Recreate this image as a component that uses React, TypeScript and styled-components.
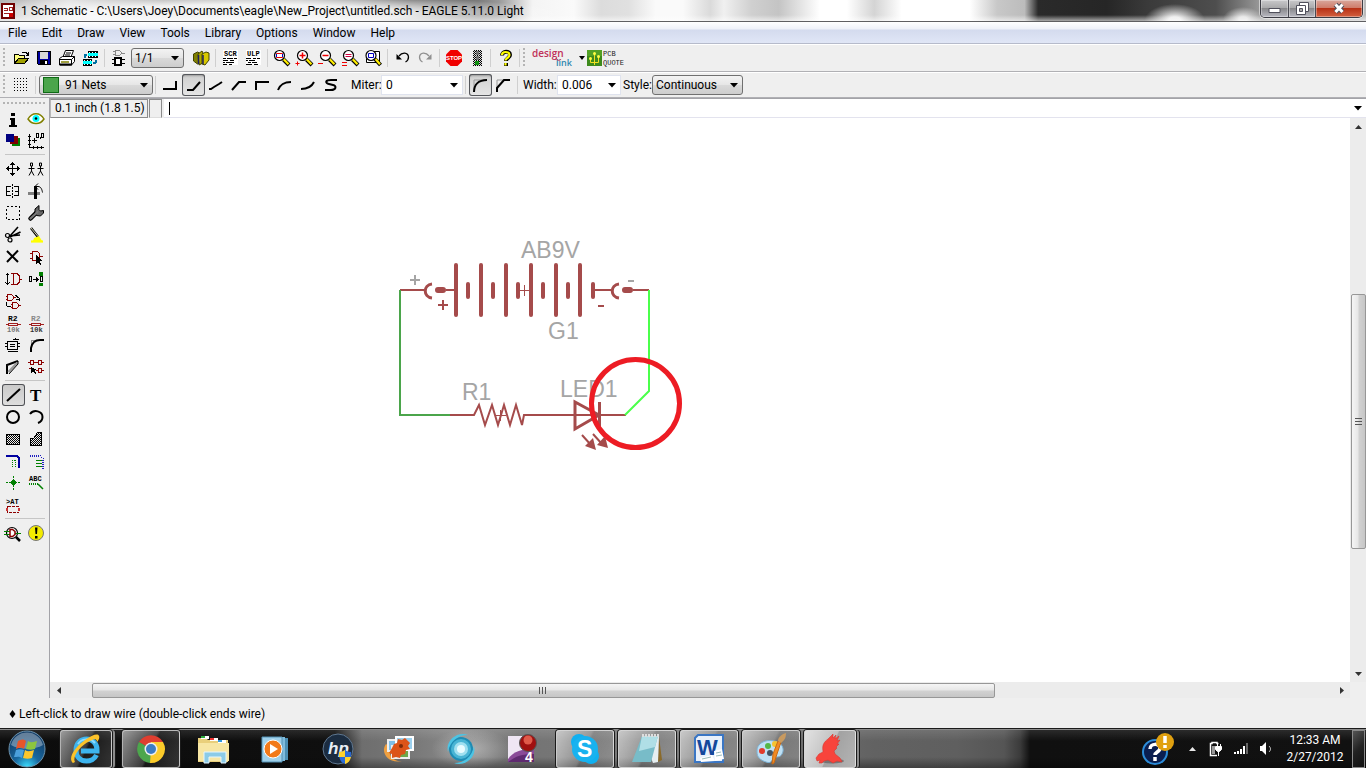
import React from "react";
import styled, { createGlobalStyle, css } from "styled-components";

const GlobalStyle = createGlobalStyle`
  * { box-sizing: border-box; }
  body { margin: 0; background: #efefef; }
  body, button, input, select {
    font-family: Roboto, "Open Sans", sans-serif;
    font-size: 12px;
    color: #000;
  }
  button, input, select { margin: 0; padding: 0; border: 0; background: none; border-radius: 0; outline: 0; }
  svg { display: block; flex: none; }
`;

/* ---------- frame ---------- */

const Window = styled.div`
  min-height: 100vh;
  display: flex;
  flex-direction: column;
  background: #efefef;
`;

const TitleBar = styled.header`
  height: 22px;
  display: flex;
  align-items: center;
  padding-left: 1px;
  border-bottom: 1px solid #5f5f62;
  background:
    linear-gradient(to bottom, transparent 0 15px, rgba(255, 255, 255, 0.6) 21px),
    radial-gradient(ellipse 30px 16px at 86% 20px, #ececec 20%, transparent),
    radial-gradient(ellipse 20px 12px at 91% 19px, #e4e4e4 20%, transparent),
    radial-gradient(ellipse 320px 19px at 18% 14px, rgba(255, 255, 255, 0.85) 50%, transparent),
    linear-gradient(to right, #b4b4b4 0, #e0e0e0 5%, #a4a4a4 12%, #b8b8b8 22%, #757575 30%, #7a7a7a 35%,
      #999 36.5%, #f4f4f4 39%, #fafafa 42%, #dcdcdc 44%, #e0e0e0 46%, #fafafa 48%, #fafafa 50%, #dadada 52%,
      #f0f0f0 53%, #d0d0d0 55%, #c4c4c4 57%, #fff 60%, #fff 62%, #d4d4d4 64%, #fff 66%, #fff 71%,
      #c8c8c8 73%, #bcbcbc 75%, #2a2a2a 76%, #262626 81%, #3a3a3a 84%, #4e4e4e 89%, #aaa 93%, #bbb);
`;

const AppTitle = styled.h1`
  flex: 1;
  margin: 0 0 0 6px;
  font-size: 12px;
  line-height: 20px;
  font-weight: 400;
  white-space: pre;
`;

const WindowButtons = styled.div`
  align-self: flex-start;
  display: flex;
  height: 18px;
  margin-right: 3px;
  border: 1px solid #3c3c44;
  border-top: 0;
  border-radius: 0 0 5px 5px;
  overflow: hidden;
  box-shadow: 0 0 0 1px rgba(255, 255, 255, 0.5);
`;

const WindowButton = styled.button<{ $w: number; $close?: boolean }>`
  width: ${(p) => p.$w}px;
  display: grid;
  place-items: center;
  border-right: ${(p) => (p.$close ? "0" : "1px solid #4a4a52")};
  background: ${(p) =>
    p.$close
      ? "linear-gradient(#d9a79c 0, #cf7d6b 45%, #b83216 50%, #d3603f 100%)"
      : "linear-gradient(#c9c9cb 0, #aaaaac 45%, #88888b 50%, #b9b9c2 100%)"};
  box-shadow: inset 0 0 0 1px rgba(255, 255, 255, 0.35);
`;

const MenuBar = styled.nav`
  height: 22px;
  display: flex;
  align-items: center;
  gap: 15px;
  padding: 0 8px;
  border-bottom: 1px solid #b6bbcb;
  background: linear-gradient(#fff 0, #eef1f9 7px, #d4dbee 8px, #e0e6f6 100%);
`;

const MenuItem = styled.a`
  color: #000;
  text-decoration: none;
  line-height: 20px;
`;

const ToolBar = styled.div<{ $h: number }>`
  height: ${(p) => p.$h}px;
  display: flex;
  align-items: center;
  border-top: 1px solid #fff;
  border-bottom: 1px solid #b0b0b4;
  padding-left: 3px;
  background: #efefef;
`;

const Grip = styled.div<{ $across?: boolean }>`
  flex: none;
  ${(p) =>
    p.$across
      ? css`height: 3px; margin: 4px 4px 3px 3px;`
      : css`width: 3px; height: 20px; margin-right: 4px;`}
  background: radial-gradient(circle at 1px 1px, #b4b4b4 1px, transparent 1px) 0 0 / 4px 4px;
`;

const Separator = styled.div<{ $room?: number }>`
  flex: none;
  width: 1px;
  height: 18px;
  margin: 0 ${(p) => 2 + (p.$room ?? 0)}px 0 2px;
  background: #cfcfcf;
`;

const ToolButton = styled.button<{ $on?: boolean }>`
  flex: none;
  width: 23px;
  height: 22px;
  display: grid;
  place-items: center start;
  ${(p) =>
    p.$on &&
    css`
      border-radius: 3px;
      background: linear-gradient(#cfcfcf, #e6e6e6);
      box-shadow: inset 0 0 0 1px #55575c, inset 0 2px 2px rgba(0, 0, 0, 0.25);
    `}
`;

const DropShell = styled.div<{ $w: number; $field?: boolean }>`
  flex: none;
  width: ${(p) => p.$w}px;
  height: 20px;
  display: flex;
  align-items: center;
  position: relative;
  margin-left: 1px;
  padding-left: ${(p) => (p.$field ? 4 : 3)}px;
  border: 1px solid ${(p) => (p.$field ? "#dfe3ee" : "#707070")};
  border-radius: ${(p) => (p.$field ? 0 : 3)}px;
  background: ${(p) => (p.$field ? "#fff" : "linear-gradient(#f3f3f3, #e6e6e6 48%, #d9d9d9 52%, #cdcdcd)")};
  svg.arrow { position: absolute; right: 4px; top: 7px; pointer-events: none; }
  select, input { flex: 1; min-width: 0; width: 100%; height: 18px; appearance: none; }
`;

const Swatch = styled.span`
  flex: none;
  width: 16px;
  height: 16px;
  margin-right: 6px;
  border: 1px solid #0f6b16;
  background: #4ba54b;
`;

const FieldLabel = styled.label<{ $gap: number; $w?: number }>`
  flex: none;
  width: ${(p) => (p.$w ? `${p.$w}px` : "auto")};
  margin-left: ${(p) => p.$gap}px;
  white-space: nowrap;
`;

const Body = styled.div`
  flex: 1;
  display: flex;
  min-height: 0;
`;

const SideBar = styled.aside`
  flex: none;
  width: 50px;
  border-right: 1px solid #a3a3a8;
`;

const Palette = styled.div`
  display: grid;
  grid-template-columns: 23px 23px;
  padding-left: 2px;
`;

const PaletteButton = styled.button<{ $on?: boolean }>`
  width: 23px;
  height: 22px;
  ${(p) =>
    p.$on &&
    css`
      border-radius: 3px;
      background: linear-gradient(#c9c9c9, #dedede);
      box-shadow: inset 0 0 0 1px #4f5156;
    `}
`;

const PaletteRule = styled.hr`
  height: 1px;
  margin: 2px 4px 3px 5px;
  border: 0;
  background: #c6c6c6;
`;

const Workspace = styled.div`
  flex: 1;
  min-width: 0;
  display: flex;
  flex-direction: column;
`;

const CommandLine = styled.div`
  height: 20px;
  flex: none;
  display: flex;
  border-top: 1px solid #a3a3a8;
  background: #efefef;
`;

const Coordinates = styled.output`
  width: 98px;
  padding-left: 4px;
  line-height: 17px;
  border: 1px solid #8c8c8c;
  border-left-color: #b8b8b8;
  white-space: nowrap;
`;

const Prompt = styled.div`
  width: 13px;
  margin: 0 2px 0 1px;
  border: 1px solid #8c8c8c;
  border-bottom-color: #ddd;
`;

const CommandBox = styled.div`
  flex: 1;
  display: flex;
  align-items: center;
  padding: 0 4px 0 5px;
  background: #fff;
  border-bottom: 1px solid #e3e3ee;
`;

const CommandInput = styled.input`
  flex: 1;
  height: 16px;
`;

const Caret = styled.span`
  width: 1px;
  height: 13px;
  background: #000;
`;

const CanvasRow = styled.div`
  flex: 1;
  display: flex;
  min-height: 0;
`;

const Sheet = styled.main`
  flex: 1;
  min-width: 0;
  padding: 112px 0 0 340px;
  background: #fff;
`;

const ScrollColumn = styled.div`
  flex: none;
  width: 16px;
  display: flex;
  flex-direction: column;
  align-items: center;
  background: #ececec;
`;

const ScrollRow = styled.div`
  flex: none;
  height: 16px;
  margin-right: 16px;
  display: flex;
  align-items: center;
  background: #ececec;
`;

const ScrollArrow = styled.button`
  flex: none;
  width: 17px;
  height: 17px;
  display: grid;
  place-items: center;
`;

const Gap = styled.div<{ $grow: number }>`
  flex: ${(p) => p.$grow} 0 0;
`;

const Thumb = styled.div<{ $grow: number; $across?: boolean }>`
  flex: ${(p) => p.$grow} 0 0;
  ${(p) => (p.$across ? "height: 15px;" : "width: 15px;")}
  display: grid;
  place-items: center;
  border: 1px solid #979797;
  border-radius: 2px;
  background: linear-gradient(${(p) => (p.$across ? "to bottom" : "to right")}, #f5f5f5, #e6e6e6 48%, #d2d2d2 52%, #c6c6c6);
`;

const StatusBar = styled.footer`
  height: 30px;
  flex: none;
  display: flex;
  align-items: center;
  gap: 3px;
  padding: 2px 9px 0;
`;

/* ---------- taskbar ---------- */

const TaskBar = styled.div`
  height: 40px;
  flex: none;
  display: flex;
  align-items: center;
  border-top: 1px solid #1b1b1b;
  box-shadow: inset 0 1px 0 #8b8b8b;
  background:
    linear-gradient(to bottom, rgba(255, 255, 255, 0.12) 0, transparent 12px 28px, rgba(0, 0, 0, 0.35)),
    radial-gradient(ellipse 40px 20px at 34.5% 50%, rgba(200, 200, 200, 0.6), transparent),
    linear-gradient(to right, #0c0c0c 0, #0f0f0f 24.5%, #6e6e6e 26.5%, #777 30%, #8a8a8a 34%, #747474 38%,
      #7b7b7b 50%, #6b6b6b 60%, #626262 64%, #5f5f5f 70%, #555 73.5%, #3a3a3a 74.7%, #101010 75.4%, #111 100%);
`;

const StartButton = styled.button`
  width: 54px;
  flex: none;
  display: grid;
  place-items: center;
`;

const Tasks = styled.div`
  flex: 1;
  display: flex;
  gap: 4px;
  padding: 1px 0 0 6px;
`;

const Task = styled.button<{ $open?: boolean; $active?: boolean; $stack?: boolean }>`
  width: ${(p) => (p.$stack ? 52 : 58)}px;
  margin-right: ${(p) => (p.$stack ? 6 : 0)}px;
  height: 38px;
  display: grid;
  place-items: center;
  border-radius: 3px;
  ${(p) =>
    p.$open &&
    css`
      border: 1px solid rgba(225, 225, 225, 0.75);
      background: ${p.$active
        ? "linear-gradient(115deg, #e2e2e2, #c0c0c0 50%, #a2a2a2 52%, #b4b4b4)"
        : "linear-gradient(115deg, rgba(255,255,255,.55), rgba(255,255,255,.2) 48%, rgba(255,255,255,.06) 52%, rgba(255,255,255,.16))"};
      box-shadow: 0 0 0 1px #1a1a1a${p.$stack ? ", 3px 0 0 0 #8c8c8c, 4px 0 0 0 #1a1a1a" : ""};
    `}
`;

const Tray = styled.div`
  flex: none;
  display: flex;
  align-items: center;
  color: #fff;
`;

const TrayIcon = styled.button<{ $w: number }>`
  width: ${(p) => p.$w}px;
  height: 36px;
  display: grid;
  place-items: center;
`;

const Clock = styled.time`
  width: 72px;
  text-align: center;
  line-height: 17px;
  color: #fff;
`;

const ShowDesktop = styled.button`
  width: 13px;
  height: 38px;
  margin: 0 1px;
  border: 1px solid #8a8a8a;
  background: linear-gradient(135deg, #555, #222 50%, #111);
`;

/* ---------- drawing helpers ---------- */

const Glyph = ({ children, smooth }: { children: React.ReactNode; smooth?: boolean }) => (
  <svg width="22" height="22" viewBox="0 0 22 22" fill="none" stroke="#000" aria-hidden="true"
    shapeRendering={smooth ? "auto" : "crispEdges"}>{children}</svg>
);

const Tiny = ({ x, y, size = 7, fill = "#000", children }: { x: number; y: number; size?: number; fill?: string; children: string }) => (
  <text x={x} y={y} fontSize={size} fontFamily="Liberation Mono, monospace" fontWeight="700" fill={fill} stroke="none">{children}</text>
);

const DownArrow = ({ className }: { className?: string }) => (
  <svg className={className} width="8" height="5" viewBox="0 0 8 5" aria-hidden="true"><path d="M0 0h8L4 4.500z" /></svg>
);

const Lens = ({ children }: { children?: React.ReactNode }) => (
  <Glyph smooth>
    <path d="M13.500 12.500l5.500 5.500" strokeWidth="4" />
    <path d="M13.500 12l5 5.300" stroke="#ffee00" strokeWidth="2.200" />
    <circle cx="9.500" cy="8.500" r="5" fill="#fff" strokeWidth="1.200" />
    {children}
  </Glyph>
);

const hatch = (
  <pattern id="hatch" width="2" height="2" patternUnits="userSpaceOnUse">
    <path d="M0 0h1v1H0zM1 1h1v1H1z" fill="#000" stroke="none" />
  </pattern>
);

const gate = (x: number, y: number, c: string) => (
  <path d={`M${x} ${y}h4l2 2v2l-2 2h-4zM${x - 2} ${y + 1.5}h2M${x - 2} ${y + 4.5}h2M${x + 6} ${y + 3}h2`} stroke={c} />
);

/* ---------- main toolbar icons ---------- */

const mainIcons: Record<string, React.ReactNode> = {
  Open: (
    <Glyph>
      <path d="M4.500 16.500v-9h4l1 1h5v3" fill="#ffff80" />
      <path d="M4.500 16.500l4-5h10l-4 5z" fill="#a0a000" />
      <path d="M12 5.500h4l2 2M18.500 5v3h-3" />
    </Glyph>
  ),
  Save: (
    <Glyph>
      <path d="M4.500 4.500h13v13h-12l-1-1z" fill="#0000a0" />
      <path d="M7 5h8v7H7z" fill="#d8d8d8" stroke="none" />
      <path d="M7 13h8v5H7z" fill="#000" stroke="none" /><path d="M12 14h2v3h-2z" fill="#fff" stroke="none" />
    </Glyph>
  ),
  Print: (
    <Glyph smooth>
      <path d="M7 10l2.500-6.500h8L15 10z" fill="#fff" />
      <path d="M10 6h5M9 8h5" />
      <path d="M3.500 11.500l3-2h12v5l-3 3.500h-12z" fill="#fff" />
      <path d="M3.500 12.500h12v5M15.500 12.500l3-3" />
      <path d="M5 15h8" stroke="#808000" strokeWidth="1.500" /><path d="M4 17.500h12" strokeWidth="2" />
    </Glyph>
  ),
  "CAM Processor": (
    <Glyph>
      <path d="M9 4h10v7H9zM4 12h9v7H4z" fill="#0ff" stroke="none" />
      <path d="M9 4h10v2H9zM9 9h10v2H9zM4 12h9v2H4zM4 17h9v2H4z" fill="#000" stroke="none" />
      <path d="M10 5.500h8M10 9.500h8M5 13.500h8M5 17.500h8" stroke="#fff" strokeDasharray="1 2" />
      <path d="M5 7.500h3M6 8v3M17 13v3M14 15.500h3" stroke="#0070a0" strokeWidth="2" />
    </Glyph>
  ),
  Board: (
    <Glyph>
      <path d="M8.500 3.500h4l2 2v1l-2 2h-4zM6 4.500h2M6 7.500h2M15 6h3" stroke="#888" />
      <path d="M8 11h6v7H8z" fill="#fff" strokeWidth="2" />
      <path d="M5 12.500h3M5 16.500h3M15 12.500h3M15 16.500h3" />
    </Glyph>
  ),
  Use: (
    <Glyph smooth>
      <path d="M3.500 7l4-2 2 1v10l-2 1-4-3z" fill="#808000" stroke="#444400" /><path d="M8 7l4-3 1 2v10l-4 2z" fill="#b0a800" stroke="#444400" />
      <path d="M12 7l4-2 3 1v7l-4 5-3-1z" fill="#d8c800" stroke="#444400" /><path d="M8.500 8v9M13 8v9" stroke="#202060" strokeWidth="1.500" />
    </Glyph>
  ),
  Script: (
    <Glyph>
      <path d="M4 3h15v15H4z" fill="#fff" stroke="none" />
      <Tiny x={5} y={9}>SCR</Tiny>
      <path d="M4 11.500h3m1 0h6m1 0h3M4 13.500h5m2 0h4M4 15.500h2m1 0h8M4 17.500h4m2 0h3" />
    </Glyph>
  ),
  "Run ULP": (
    <Glyph>
      <path d="M4 3h15v15H4z" fill="#fff" stroke="none" />
      <Tiny x={5} y={9}>ULP</Tiny>
      <path d="M4 11.500h5m2 0h3m1 0h3M4 13.500h2m1 0h6M6 15.500h3m1 0h5M4 17.500h6m2 0h4" />
    </Glyph>
  ),
  Fit: <Lens><path d="M6.500 6.500h6v4h-6z" fill="#fff" stroke="#e00" /><path d="M6.500 7v3M12.500 7v3" stroke="#00c" /></Lens>,
  "Zoom in": <Lens><path d="M9.500 5.500v6M6.500 8.500h6" stroke="#e00" strokeWidth="1.500" /><path d="M4.500 14.500v4M2.500 16.500h4" stroke="#e00" /></Lens>,
  "Zoom out": <Lens><path d="M6.500 8.500h6" stroke="#e00" strokeWidth="1.500" /><path d="M2 16.500h5" stroke="#e00" /></Lens>,
  Redraw: <Lens><path d="M6.500 7.500h6M6.500 9.500h6" stroke="#d00040" /><path d="M3 15.500h5M3 18.500h5" stroke="#e00" /></Lens>,
  Select: (
    <Glyph smooth>
      <path d="M12 4.500h5.500v11h-13v-4" fill="#fff" />
      <path d="M13 12l5.500 6" strokeWidth="4" /><path d="M13.500 12l4.500 5.300" stroke="#ffee00" strokeWidth="2.200" />
      <circle cx="9" cy="8.500" r="5" fill="#fff" strokeWidth="1.200" /><path d="M6.500 6.500h5v4h-5z" stroke="#0000c0" />
    </Glyph>
  ),
  Undo: <Glyph smooth><path d="M8 9c3-4 9-4 9.500 1 0 2-1 4-3 5" strokeWidth="1.300" /><path d="M5.500 7v5.500H11z" fill="#000" stroke="none" /></Glyph>,
  Redo: <Glyph smooth><path d="M15 9c-3-4-9-4-9.500 1 0 2 1 4 3 5" stroke="#909090" strokeWidth="1.300" /><path d="M17.500 7v5.500H12z" fill="#909090" stroke="none" /></Glyph>,
  Stop: (
    <Glyph smooth>
      <path d="M8.500 3h7l4.500 4.500v7L15.500 19h-7L4 14.500v-7z" fill="#f00000" stroke="none" />
      <text x="12" y="13" fontSize="6" textAnchor="middle" fontFamily="Liberation Sans, sans-serif" fontWeight="700" fill="#fff" stroke="none">STOP</text>
    </Glyph>
  ),
  Go: (
    <Glyph>
      {hatch}
      <path d="M9 3h8v16H9z" fill="#d8d8d8" stroke="none" /><path d="M8 3h9v16H8z" fill="url(#hatch)" stroke="none" />
      <path d="M11 4h3v4h-3zM11 9h3v4h-3z" fill="#707070" stroke="none" /><path d="M10 14h4v4h-4z" fill="#109010" stroke="none" />
    </Glyph>
  ),
  Help: (
    <Glyph smooth>
      <path d="M8 8.500C8 3.500 16 3.500 16 8c0 3-4 3-4 6M12 16v3" strokeWidth="4" />
      <path d="M8 8c0-4 7.500-4 7.500 0 0 3-4 3-4 5.500M11.500 16v2.500" stroke="#ff0" strokeWidth="2.200" />
    </Glyph>
  ),
};

const bends: [string, string][] = [
  ["Bend 0", "M4 15h13V7"],
  ["Bend 1", "M5 16h6l7-8"],
  ["Bend 2", "M4 15h2l3-2 5-3 3-2"],
  ["Bend 3", "M4 16l7-8h7"],
  ["Bend 4", "M5 16V8h13"],
  ["Bend 5", "M4 16c2-5 5-8 13-8"],
  ["Bend 6", "M4 15c8 0 11-3 13-7"],
  ["Freehand", "M17 6h-6c-6 0-6 3-2 4l4 1c4 1 3 5-2 5H5"],
];

/* ---------- palette icons ---------- */

const red = "#8b0000";

const paletteTop: [string, React.ReactNode][] = [
  ["Info", <Glyph key="i"><path d="M9 5h4v3H9zM8 10h5v7h2v2H7v-2h2v-5H8z" fill="#000" stroke="none" /></Glyph>],
  ["Show", (
    <Glyph key="s" smooth>
      <path d="M3 11c4-7 12-7 16 0-4 6-12 6-16 0z" fill="#fff" stroke="#808000" strokeWidth="1.500" />
      <circle cx="11" cy="10.500" r="3.500" fill="#0ff" stroke="none" /><circle cx="11" cy="10.500" r="1.300" fill="#000" stroke="none" />
    </Glyph>
  )],
  ["Display", (
    <Glyph key="d">
      <path d="M10 8h8v8h-8z" fill="#008000" stroke="none" /><path d="M8 6h8v8H8z" fill="#800000" stroke="none" />
      <path d="M4 4h8v8H4z" fill="#000080" stroke="none" />
    </Glyph>
  )],
  ["Mark", (
    <Glyph key="m">
      <path d="M4.500 4v14M4 17.500h15M3 6.500h3M3 10.500h3M3 14.500h3M8.500 16v3M12.500 16v3M16.500 16v3M9.500 8v5M7 10.500h5" />
      <path d="M11.500 3.500h2v4h-2zM16.500 3.500h2v4h-2zM15 7v2" />
    </Glyph>
  )],
];

const paletteEdit: [string, React.ReactNode][] = [
  ["Move", <Glyph key="0"><path d="M10.500 4v14M4 10.500h14M8 6.500h5M9 5.500h3M8 15.500h5M9 16.500h3M6.500 8v5M5.500 9v3M15.500 8v5M16.500 9v3" /></Glyph>],
  ["Copy", <Glyph key="1" smooth><path d="M5.500 5h2v3h-2zM14.500 5h2v3h-2zM3.500 10.500h6M12.500 10.500h6M6.500 8v5l-2.500 4.500M6.500 13l2.500 4.500M15.500 8v5l-2.500 4.500M15.500 13l2.500 4.500" /></Glyph>],
  ["Mirror", <Glyph key="2"><path d="M9 6.500H4.500v9H9M5 11.500h3M12 6.500h4.500v9H12M13 11.500h3" /><path d="M10.500 4v15" strokeDasharray="2 1" /></Glyph>],
  ["Rotate", <Glyph key="3"><path d="M3 12h6v3H3zM12 12h3v3h-3z" fill="#808080" stroke="none" /><path d="M9 7h3v12H9z" fill="#000" stroke="none" /><path d="M9 6.500h4c3 0 4 3 4.500 6M13 3.500l-3 3 3 3" shapeRendering="auto" /></Glyph>],
  ["Group", <Glyph key="4"><path d="M4.500 4.500h13v13h-13z" strokeDasharray="2 2" /></Glyph>],
  ["Change", (
    <Glyph key="5" smooth>
      <path d="M5.500 16.500l6-6" strokeWidth="4.500" strokeLinecap="round" />
      <path d="M10 10.500V7l4-3.500v4l1.500 1.500 3-.5V11l-3 3-4-.5z" fill="#666" />
      <path d="M5.500 16.500l7-6.500" stroke="#777" strokeWidth="2.200" strokeLinecap="round" />
    </Glyph>
  )],
  ["Cut", <Glyph key="6" smooth><path d="M8 12l8-9M8 13l10.500-5M7 12l11-1" strokeWidth="1.600" /><circle cx="5.500" cy="11.500" r="2" strokeWidth="1.200" /><circle cx="8" cy="16" r="2" strokeWidth="1.200" /></Glyph>],
  ["Paste", <Glyph key="7" smooth><path d="M6 4l7 9" strokeWidth="2.500" /><path d="M6 4l7 8.500" stroke="#d0d0b0" /><path d="M9 14l5-2 3 5H8z" fill="#ff0" stroke="none" /><path d="M6 17.500h12" stroke="#ff0" strokeWidth="2.200" /></Glyph>],
  ["Delete", <Glyph key="8" smooth><path d="M5 5l11 11M16 4.500L5 16" strokeWidth="2" /></Glyph>],
  ["Add", <Glyph key="9"><path d="M7.500 5.500h5l2 2v5l-2 2h-5zM5 7.500h2M5 12.500h2M15 10.500h3" stroke={red} /><path d="M11 9v9l2-2 2 3 1-1-1-3h3z" fill="#000" stroke="none" /></Glyph>],
  ["Pinswap", <Glyph key="10"><path d="M5.500 6v10M3.500 7.500l2-2 2 2M3.500 14.500l2 2 2-2" /><path d="M9 5.500h6l2 2M9 16.500h6l2-2M11.500 5v12M17.500 7v8M17 11.500h3" stroke={red} /></Glyph>],
  ["Replace", <Glyph key="11"><path d="M4.500 8.500h2v5h-2zM8 11.500h5M11 9.500l2 2-2 2M15.500 8.500h2v5h-2z" /><path d="M14 4h4v4h-4zM14 15h4v3h-4z" fill="#008000" stroke="none" /></Glyph>],
  ["Gateswap", <Glyph key="12">{gate(5.5, 4.5, red)}{gate(10.5, 12.5, red)}<path d="M13 5l4 3v3M17 10l-3-1M4 12l1 4 4 1" /></Glyph>],
  ["", null],
  ["Name", <Glyph key="14"><Tiny x={6} y={9} size={8}>R2</Tiny><path d="M4 12.500h2M6.500 11.500h9v2h-9zM16 12.500h3" stroke="#a02020" /><Tiny x={5} y={20} size={7} fill="#777">10k</Tiny></Glyph>],
  ["Value", <Glyph key="15"><Tiny x={6} y={9} size={8} fill="#888">R2</Tiny><path d="M4 12.500h2M6.500 11.500h9v2h-9zM16 12.500h3" stroke="#a02020" /><Tiny x={5} y={20} size={7} fill="#333">10k</Tiny></Glyph>],
  ["Smash", <Glyph key="16"><path d="M5.500 7.500h10v8h-10zM3 9.500h2M3 12.500h2M16 9.500h2M16 12.500h2M8 10.500h5M8 12.500h5M11 5.500h6M13 3.500v2M6 17.500h10" /></Glyph>],
  ["Miter", <Glyph key="17"><path d="M6 18V6h13" stroke="#909090" /><path d="M6 18v-4c1-5 4-8 9-8h4" strokeWidth="2" shapeRendering="auto" /></Glyph>],
  ["Split", <Glyph key="18" smooth><path d="M5 18V9l11-4" strokeWidth="2" /><path d="M6.500 16l9-9.500" stroke="#999" strokeWidth="2.500" /><path d="M16 5v3l-9 10" /></Glyph>],
  ["Invoke", (
    <Glyph key="19">
      <path d="M5.500 4.500h3v4h-3zM13.500 4.500h3v4h-3zM13.500 12.500h3v4h-3zM3 6.500h2M9 6.500h2M11 6.500h2M17 6.500h2M11 14.500h2M17 14.500h2M4 12.500h2" stroke={red} strokeWidth="1.500" />
      <path d="M6 11v6l2-1 3 2-1-4h2z" fill="#000" stroke="none" />
    </Glyph>
  )],
];

const paletteDraw: [string, React.ReactNode][] = [
  ["Wire", <Glyph key="0" smooth><path d="M5 17L18 5" strokeWidth="2" /></Glyph>],
  ["Text", <Glyph key="1" smooth><text x="5" y="17" fontSize="17" fontFamily="Liberation Serif, serif" fontWeight="700" fill="#000" stroke="none">T</text></Glyph>],
  ["Circle", <Glyph key="2" smooth><circle cx="11" cy="11" r="6" strokeWidth="2" /></Glyph>],
  ["Arc", <Glyph key="3" smooth><path d="M5 8c4-5 12.500-3 12.500 3 0 3-2 5-4.500 6" strokeWidth="2" /></Glyph>],
  ["Rect", <Glyph key="4"><path d="M4.500 6.500h13v10h-13z" fill="url(#hatch)" /></Glyph>],
  ["Polygon", <Glyph key="5"><path d="M5.500 17.500v-7h3l4-6h4v13z" fill="url(#hatch)" /></Glyph>],
  ["Bus", <Glyph key="6"><path d="M4 6h11l2 2v10" stroke="#0000a0" strokeWidth="2" /><path d="M10.500 10v8M13.500 10v8M10 10.500h4" stroke="#008000" strokeDasharray="1 1" /></Glyph>],
  ["Net", <Glyph key="7"><path d="M5 5.500h10l3 3v10" stroke="#2020c0" strokeDasharray="1 1" strokeWidth="2" /><path d="M11 10.500h6M11 13.500h6M11 16.500h6" stroke="#008000" /></Glyph>],
  ["Junction", <Glyph key="8"><path d="M10 8h3v1h1v3h-1v1h-3v-1H9V9h1z" fill="#008000" stroke="none" /><path d="M11.500 4v14M4 10.500h14" stroke="#008000" strokeDasharray="2 1" /></Glyph>],
  ["Label", <Glyph key="9"><Tiny x={4} y={9}>ABC</Tiny><path d="M4 11.500h9" stroke="#008000" strokeDasharray="1 1" strokeWidth="2" /><path d="M13 12l5 5" stroke="#008000" strokeWidth="1.500" shapeRendering="auto" /></Glyph>],
  ["Attribute", <Glyph key="10"><Tiny x={4} y={10}>&gt;AT</Tiny><path d="M5.500 12.500h11v6h-11z" stroke={red} strokeDasharray="3 1" /><path d="M4 14h2v3H4zM16 14h2v3h-2z" fill="#c33" stroke="none" /></Glyph>],
];

const paletteCheck: [string, React.ReactNode][] = [
  ["ERC", (
    <Glyph key="0" smooth>
      <circle cx="10" cy="11" r="5.500" strokeWidth="1.200" /><path d="M2 9.500h6M2 12.500h6M13 11.500h6" stroke="#008000" />
      <path d="M8 7.500h2.500l2.500 2v3l-2.500 2H8z" fill="#fff" stroke={red} strokeWidth="1.500" /><path d="M14 15l4 4" strokeWidth="2.500" />
    </Glyph>
  )],
  ["Errors", (
    <Glyph key="1" smooth>
      <circle cx="11" cy="11" r="7.500" fill="#f4ec00" stroke="#777" /><path d="M10 5.500h2.500l-.5 6.500h-1.500zM10 14h2.500v2.500H10z" fill="#000" stroke="none" />
    </Glyph>
  )],
];

const PaletteGroup = ({ tools, on }: { tools: [string, React.ReactNode][]; on?: string }) => (
  <Palette>
    {tools.map(([name, icon], i) =>
      name ? <PaletteButton key={name} title={name} aria-label={name} $on={name === on}>{icon}</PaletteButton> : <span key={i} />
    )}
  </Palette>
);

const Tools = ({ names }: { names: string[] }) => (
  <>{names.map((n) => <ToolButton key={n} title={n} aria-label={n}>{mainIcons[n]}</ToolButton>)}</>
);

/* ---------- brand drawings ---------- */

const DesignLink = styled.button`
  height: 24px;
  margin-left: 2px;
`;

const PcbQuote = styled.button`
  margin-left: 2px;
`;

const Schematic = () => {
  const part = "#a54b4b";
  const label = { fontFamily: "Liberation Sans, Arial, sans-serif", fontSize: 23, fill: "#a5a5a5" };
  const cells = [66, 91, 116, 141, 166, 190];
  return (
    <svg width="300" height="230" viewBox="0 0 300 230" fill="none" stroke={part} strokeWidth="2" role="img" aria-label="Schematic">
      <text {...label} stroke="none" x="131" y="28">AB9V</text>
      <text {...label} stroke="none" x="158" y="109">G1</text>
      <text {...label} stroke="none" x="72" y="170">R1</text>
      <text {...label} stroke="none" x="170" y="167">LED1</text>
      <path d="M20 50h10M25 45v10M238 51h6" stroke="#a5a5a5" />
      <path d="M10 60h24M56 60h10M203 60h18M243 60h16" />
      <path d="M42 54c-9 1-9 13 0 14M229 54c-9 1-9 13 0 14" strokeWidth="3" />
      <path d="M48 60h5M235 60h5" strokeWidth="6" strokeLinecap="round" />
      <path d="M48 75h10M53 70v10M208 76h6" />
      {cells.map((x) => <path key={x} d={`M${x} 35v50`} strokeWidth="4" strokeLinecap="round" />)}
      {cells.map((x, i) => <path key={x} d={`M${i === 5 ? 203 : x + 12} 54v13`} strokeWidth="4" strokeLinecap="round" />)}
      <path d="M128 60.500h11M134.500 55v11M105 185.500h11M110.500 180v11" strokeWidth="1" />
      <path d="M59 185h25l5-10 6 20 7-20 6 20 6-20 6 20 6-20 6 20 2-10h50" />
      <path d="M184 185h52" />
      <path d="M185 172v27l24-14zM209.500 172v27" strokeWidth="3" />
      <path d="M192 205l9 10M203 204l9 10" />
      <path d="M203 208l3 12-11-4zM215 206l3 12-11-3z" fill={part} stroke="none" />
      <path d="M10 60v125h50" stroke="#4ba54b" />
      <path d="M259 60v101l-24 24" stroke="#4bff4b" />
      <circle cx="245.500" cy="173.500" r="44" stroke="#ed1c24" strokeWidth="5" />
    </svg>
  );
};

const Pic = ({ children, label, w = 34 }: { children: React.ReactNode; label?: string; w?: number }) => (
  <svg width={w} height={w} viewBox="0 0 34 34" fill="none" role="img" aria-label={label}>{children}</svg>
);

const StartOrb = () => (
  <svg width="38" height="38" viewBox="0 0 38 38" role="img" aria-label="Start">
    <defs>
      <radialGradient id="orb" cx="50%" cy="100%" r="90%">
        <stop offset="0" stopColor="#3de0ff" /><stop offset=".4" stopColor="#1868a0" /><stop offset="1" stopColor="#123c66" />
      </radialGradient>
    </defs>
    <circle cx="19" cy="19" r="18" fill="url(#orb)" stroke="#6e93ad" />
    <path d="M3 15a16.500 16.500 0 0 1 32 0c-8 5-24 5-32 0z" fill="#fff" opacity=".35" />
    <path d="M10 11c3-2 6-2 8 0l-2 8c-3-2-5-1-8 0z" fill="#e8562a" /><path d="M20 11c3 2 6 1 9 0l-2 8c-3 1-6 1-9 0z" fill="#8cc63e" />
    <path d="M8 20c3-1 5-1 8 0l-2 8c-3-2-5-1-8-1z" fill="#4ba0dc" /><path d="M17 20c3 2 6 1 9 0l-2 8c-3 1-6 1-9 0z" fill="#fcc62c" />
  </svg>
);

const taskItems: { name: string; open?: boolean; active?: boolean; stack?: boolean; icon: React.ReactNode }[] = [
  { name: "Internet Explorer", open: true, stack: true, icon: (
    <Pic>
      <path d="M27.500 23c-2 4-5 6-10 6-6 0-10.500-4-10.500-11S12 7 17.500 7 28 11 28 17.500v1.500H12" stroke="#3db4ee" strokeWidth="5" />
      <path d="M9 12c3-5 12-7 17-1" stroke="#8fdcff" strokeWidth="2" />
      <path d="M4 31c-6-5 3-17 12-23 7-5 13-7 14-4 1 2-1 5-2 6 0-3-2-4-7-1C10 14 3 26 6 30z" fill="#fcc22a" />
    </Pic>
  ) },
  { name: "Google Chrome", open: true, icon: (
    <Pic>
      <path d="M17 17L5 10a14 14 0 0 1 24 0z" fill="#df3e30" /><path d="M17 17L5 10a14 14 0 0 0 11 21l6-11z" fill="#4ca64c" />
      <path d="M17 17l-1 14a14 14 0 0 0 13-21H17z" fill="#fccb2a" /><circle cx="17" cy="17" r="6.500" fill="#eee" /><circle cx="17" cy="17" r="5" fill="#3c7cc4" />
    </Pic>
  ) },
  { name: "Explorer", icon: (
    <Pic>
      <path d="M2 6h8l2 2h20v22H2z" fill="#e9cf7b" /><path d="M5 4h8v3H5zM14 6h8v3h-8zM22 8h8v3h-8z" fill="#fff" />
      <path d="M5 4h4v2H5z" fill="#2eae3c" /><path d="M14 6h4v2h-4z" fill="#e33" /><path d="M22 8h4v2h-4z" fill="#39d" />
      <path d="M2 11h31v18H2z" fill="#f7e6a4" /><path d="M8 31V20h22v11h-5v-6H13v6z" fill="#8ccbe8" stroke="#e4f6ff" />
    </Pic>
  ) },
  { name: "Media Player", icon: (
    <Pic>
      <path d="M10 6h20v22H10z" fill="#4b8fb5" /><path d="M7 5h20v24H7z" fill="#7fbbdc" /><path d="M4 5h20v25H4z" fill="#9fd0ea" stroke="#5592b5" />
      <circle cx="15" cy="17" r="9" fill="#f27a1a" stroke="#fff" /><path d="M12 12v10l8-5z" fill="#fff" />
    </Pic>
  ) },
  { name: "HP", icon: (
    <Pic>
      <circle cx="18" cy="17" r="15" fill="#1b2c40" stroke="#5f7790" />
      <text x="8" y="22" fontSize="17" fontStyle="italic" fontFamily="Liberation Sans, sans-serif" fontWeight="700" fill="#e8eef4">hp</text>
      <path d="M19 20c3 0 4-1 6-2 2 1 3 2 6 2 0 6-1 10-6 12-5-2-6-6-6-12z" fill="#2b6cd8" /><path d="M25 18c-2 1-3 2-6 2v5h6zM25 25h6c-1 4-3 6-6 7z" fill="#ffd22e" />
    </Pic>
  ) },
  { name: "Photo Gallery", icon: (
    <Pic>
      <path d="M4 12c-6 8 2 20 16 17-9 1-14-6-12-14z" fill="#f0a040" />
      <path d="M6 8h14v11H6z" fill="#7fc0e8" stroke="#eee" strokeWidth="2" /><path d="M10 14h17v12H10z" fill="#6ea84a" stroke="#eee" strokeWidth="2" />
      <path d="M14 5h17v13H14z" fill="#9bd0ee" stroke="#fff" strokeWidth="2" />
      <path d="M10 16l2-4 3-1 1-4 4 1 3-2 3 3 2 2-2 3 2 3-4 1-1 4-4 1-1 3-4-1-4 1v-4l-3-1z" fill="#dc5418" /><circle cx="19" cy="14" r="2" fill="#7c2a08" />
    </Pic>
  ) },
  { name: "Sync", icon: (
    <Pic>
      <circle cx="17" cy="17" r="12" fill="#1e8cb4" /><circle cx="17" cy="17" r="10" fill="#48b4d4" /><circle cx="17" cy="17" r="7" fill="#9fe0f0" /><circle cx="17" cy="17" r="4" fill="#e8fcff" />
      <path d="M4 20C1 8 14-1 24 3 14 3 6 9 4 20zM30 14c3 12-10 21-20 17 10 0 18-6 20-17z" fill="#4cc4e4" />
    </Pic>
  ) },
  { name: "Recorder", icon: (
    <Pic>
      <path d="M2 4h26v26H2z" fill="#efe6f4" /><path d="M2 27c6-8 14-10 26-10v13H2z" fill="#8a4a98" /><path d="M2 30c8-6 14-8 26-8v8z" fill="#5f2a70" />
      <text x="19" y="30" fontSize="14" fontFamily="Liberation Sans, sans-serif" fontWeight="700" fill="#fff">4</text>
      <circle cx="22" cy="11" r="8.500" fill="#a01010" stroke="#555" /><circle cx="22" cy="8" r="4.500" fill="#e05a4a" />
    </Pic>
  ) },
  { name: "Skype", open: true, icon: (
    <Pic>
      <circle cx="11" cy="10" r="8" fill="#10b0f0" /><circle cx="23" cy="24" r="8" fill="#10b0f0" /><circle cx="17" cy="17" r="13" fill="#18b2ef" />
      <text x="9" y="25" fontSize="23" fontFamily="Liberation Sans, sans-serif" fontWeight="700" fill="#fff">S</text>
    </Pic>
  ) },
  { name: "Notepad", open: true, icon: (
    <Pic>
      <path d="M29 5l3 23-4 2z" fill="#8a6a2a" /><path d="M12 4h17l-1 26-5 1z" fill="#e6eef0" /><path d="M12 4h16l-7 26H2z" fill="#78bcc8" /><path d="M12 4h16l-3 11-16 4z" fill="#b0dfe6" />
      <path d="M12 3.500h17" stroke="#ddd" strokeWidth="3" strokeDasharray="2 1" />
    </Pic>
  ) },
  { name: "Word", open: true, icon: (
    <Pic>
      <path d="M6 3h25v27H3V6z" fill="#e8f0fa" stroke="#3a76c4" strokeWidth="2" />
      <text x="5" y="23" fontSize="22" fontFamily="Liberation Sans, sans-serif" fontWeight="700" fill="#14489c">W</text>
      <path d="M22 19l8-2 2 10-9 2zM8 26l12-3 3 6-14 1z" fill="#fff" /><path d="M10 27l9-2M24 21l5-1M24 24l6-1" stroke="#9bb" />
    </Pic>
  ) },
  { name: "Paint", open: true, icon: (
    <Pic>
      <path d="M3 20C2 11 12 7 20 9c8 1 11 8 8 13-2 4-5 2-8 4s-2 6-8 4-9-5-9-10z" fill="#bfe0f4" stroke="#7eb2d4" />
      <circle cx="8" cy="19" r="3" fill="#e23c2c" /><circle cx="14" cy="14" r="3" fill="#54b848" /><circle cx="21" cy="12" r="3" fill="#f5c330" /><circle cx="16" cy="21" r="3" fill="#456" />
      <path d="M27 10l-7 21-2 1 1-10 5-13z" fill="#f08a24" stroke="#c96a14" /><path d="M24 9c0-4 4-7 8-8 0 4-1 7-5 10z" fill="#c89a60" />
    </Pic>
  ) },
  { name: "EAGLE", open: true, active: true, stack: true, icon: (
    <Pic>
      <ellipse cx="19" cy="29" rx="12" ry="2.500" fill="#555" opacity=".6" />
      <path d="M10 19c-1-6 1-9 5-12l5-5 0 4 3-3-1 4 4-3-2 5 3-1-3 4 2 0-3 3 1 1-3 3 1 3 5 4 2 4-5-1-4 2-5-3-4 1-2 2h-3l1-3-3 1-1-3 3-4 4-2z" fill="#f8443c" stroke="#d83830" strokeWidth=".6" />
    </Pic>
  ) },
];

export default function App() {
  return (
    <Window>
      <GlobalStyle />
      <TitleBar>
        <svg width="14" height="16" viewBox="0 0 14 16" shapeRendering="crispEdges" aria-hidden="true">
          <path d="M1 1h12v14H1z" fill="#fff" stroke="#700000" strokeWidth="2" />
          <path d="M3 5.500h3v2H3M8.500 4.500h3v3h-3zM3 10.500h5" fill="none" stroke="#a02020" /><path d="M8 10h4v4H8z" fill="#c00" />
        </svg>
        <AppTitle>{"1 Schematic - C:\\Users\\Joey\\Documents\\eagle\\New_Project\\untitled.sch - EAGLE 5.11.0 Light"}</AppTitle>
        <WindowButtons>
          <WindowButton $w={28} aria-label="Minimize">
            <svg width="13" height="13" viewBox="0 0 13 13"><path d="M1 6.500h11v4H1z" fill="#fff" stroke="#50505c" /></svg>
          </WindowButton>
          <WindowButton $w={27} aria-label="Restore">
            <svg width="13" height="13" viewBox="0 0 13 13"><path d="M3.500.5h9v9h-9z" fill="#fff" stroke="#50505c" /><path d="M.5 3.500h9v9h-9z" fill="#fff" stroke="#50505c" /><path d="M3.500 6.500h3v3h-3z" fill="#aaa" stroke="#50505c" /></svg>
          </WindowButton>
          <WindowButton $w={46} $close aria-label="Close">
            <svg width="13" height="13" viewBox="0 0 13 13"><path d="M2.500 2.500l7 7.500M9.500 2.500L2.500 10" stroke="#50505c" strokeWidth="5" /><path d="M2.500 2.500l7 7.500M9.500 2.500L2.500 10" stroke="#fff" strokeWidth="3" /></svg>
          </WindowButton>
        </WindowButtons>
      </TitleBar>

      <MenuBar>
        {["File", "Edit", "Draw", "View", "Tools", "Library", "Options", "Window", "Help"].map((m) => (
          <MenuItem key={m} href="#">{m}</MenuItem>
        ))}
      </MenuBar>

      <ToolBar $h={28}>
        <Grip />
        <Tools names={["Open", "Save", "Print", "CAM Processor"]} />
        <Separator />
        <Tools names={["Board"]} />
        <DropShell $w={53}>
          <select aria-label="Sheet"><option>1/1</option></select>
          <DownArrow className="arrow" />
        </DropShell>
        <FieldLabel as="span" $gap={6} />
        <Tools names={["Use"]} />
        <Separator $room={1} />
        <Tools names={["Script", "Run ULP"]} />
        <Separator />
        <Tools names={["Fit", "Zoom in", "Zoom out", "Redraw", "Select"]} />
        <Separator $room={1} />
        <Tools names={["Undo", "Redo"]} />
        <Separator />
        <Tools names={["Stop", "Go"]} />
        <Separator $room={1} />
        <Tools names={["Help"]} />
        <Separator $room={1} />
        <Grip />
        <DesignLink aria-label="Design link">
          <svg width="44" height="24" viewBox="0 0 44 24">
            <text x="0" y="11" fontSize="10" fontFamily="Open Sans, sans-serif" fontWeight="600" fill="#c03058">design</text>
            <text x="24" y="20" fontSize="9" fontFamily="Open Sans, sans-serif" fontWeight="600" fill="#3088b0">link</text>
            <path d="M24 12c1 3 4 3 5 1" fill="none" stroke="#c03058" />
          </svg>
        </DesignLink>
        <FieldLabel as="span" $gap={3}><svg width="6" height="4" viewBox="0 0 6 4"><path d="M0 0h6L3 4z" /></svg></FieldLabel>
        <PcbQuote aria-label="PCB quote">
          <svg width="37" height="18" viewBox="0 0 37 18">
            <path d="M0 1h15v16H0z" fill="#3d8a1c" /><path d="M0 1h15v6H0z" fill="#62b02c" opacity=".6" />
            <path d="M7.500 4v12M3.500 10v3.500h8V8" fill="none" stroke="#f0e020" />
            <circle cx="7.500" cy="4.500" r="1.500" fill="#ff4" /><circle cx="3.500" cy="9.500" r="1.500" fill="#ff4" /><circle cx="11.500" cy="7.500" r="1.500" fill="#ff4" />
            <text x="16" y="7" fontSize="7" fontFamily="Liberation Mono, monospace" fill="#222">PCB</text>
            <text x="16" y="16" fontSize="7" fontFamily="Liberation Mono, monospace" fill="#222">QUOTE</text>
          </svg>
        </PcbQuote>
      </ToolBar>

      <ToolBar $h={26}>
        <Grip />
        <ToolButton aria-label="Grid">
          <Glyph><path d="M4 4.500h14M4 7.500h14M4 10.500h14M4 13.500h14M4 16.500h14" strokeDasharray="1 2" /></Glyph>
        </ToolButton>
        <Separator />
        <DropShell $w={114}>
          <Swatch />
          <select aria-label="Layer"><option>91 Nets</option></select>
          <DownArrow className="arrow" />
        </DropShell>
        <Separator $room={1} />
        {bends.map(([name, d]) => (
          <ToolButton key={name} aria-label={name} $on={name === "Bend 1"}>
            <Glyph smooth><path d={d} strokeWidth="2" /></Glyph>
          </ToolButton>
        ))}
        <FieldLabel $gap={8} $w={29} htmlFor="miter">Miter:</FieldLabel>
        <DropShell $w={82} $field>
          <input id="miter" defaultValue="0" />
          <DownArrow className="arrow" />
        </DropShell>
        <Separator $room={1} />
        <ToolButton aria-label="Round miter" $on><Glyph smooth><path d="M5 18V6h13" stroke="#999" /><path d="M5 18c0-7 4-12 13-12" strokeWidth="2" /></Glyph></ToolButton>
        <ToolButton aria-label="Straight miter"><Glyph smooth><path d="M5 18V6h13" stroke="#999" /><path d="M5 18v-4l7-8h6" strokeWidth="2" /></Glyph></ToolButton>
        <Separator $room={1} />
        <FieldLabel $gap={2} $w={33} htmlFor="width">Width:</FieldLabel>
        <DropShell $w={64} $field>
          <input id="width" defaultValue="0.006" />
          <DownArrow className="arrow" />
        </DropShell>
        <FieldLabel $gap={2} $w={28} htmlFor="style">Style:</FieldLabel>
        <DropShell $w={91}>
          <select id="style"><option>Continuous</option></select>
          <DownArrow className="arrow" />
        </DropShell>
      </ToolBar>

      <Body>
        <SideBar>
          <Grip $across />
          <PaletteGroup tools={paletteTop} />
          <PaletteRule />
          <PaletteGroup tools={paletteEdit} />
          <PaletteRule />
          <PaletteGroup tools={paletteDraw} on="Wire" />
          <PaletteRule />
          <PaletteGroup tools={paletteCheck} />
        </SideBar>
        <Workspace>
          <CommandLine>
            <Coordinates>0.1 inch (1.8 1.5)</Coordinates>
            <Prompt />
            <CommandBox>
              <Caret />
              <CommandInput aria-label="Command" />
              <DownArrow />
            </CommandBox>
          </CommandLine>
          <CanvasRow>
            <Sheet><Schematic /></Sheet>
            <ScrollColumn>
              <ScrollArrow aria-label="Scroll up"><svg width="7" height="4"><path d="M0 4h7L3.500 0z" fill="#333" /></svg></ScrollArrow>
              <Gap $grow={160} />
              <Thumb $grow={254}><svg width="7" height="8" stroke="#555"><path d="M0 .5h7M0 3.500h7M0 6.500h7" /></svg></Thumb>
              <Gap $grow={116} />
              <ScrollArrow aria-label="Scroll down"><svg width="7" height="4"><path d="M0 0h7L3.500 4z" fill="#333" /></svg></ScrollArrow>
            </ScrollColumn>
          </CanvasRow>
          <ScrollRow>
            <ScrollArrow aria-label="Scroll left"><svg width="4" height="7"><path d="M4 0v7L0 3.500z" fill="#333" /></svg></ScrollArrow>
            <Gap $grow={25} />
            <Thumb $grow={902} $across><svg width="8" height="7" stroke="#555"><path d="M.5 0v7M3.500 0v7M6.500 0v7" /></svg></Thumb>
            <Gap $grow={339} />
            <ScrollArrow aria-label="Scroll right"><svg width="4" height="7"><path d="M0 0v7l4-3.500z" fill="#333" /></svg></ScrollArrow>
          </ScrollRow>
        </Workspace>
      </Body>

      <StatusBar>
        <svg width="7" height="8" viewBox="0 0 7 8" aria-hidden="true"><path d="M3.500 0L6.500 4 3.500 8 .5 4z" /></svg>
        <span>Left-click to draw wire (double-click ends wire)</span>
      </StatusBar>

      <TaskBar>
        <StartButton aria-label="Start"><StartOrb /></StartButton>
        <Tasks>
          {taskItems.map((t) => (
            <Task key={t.name} aria-label={t.name} $open={t.open} $active={t.active} $stack={t.stack}>{t.icon}</Task>
          ))}
        </Tasks>
        <Tray>
          <TrayIcon $w={46} aria-label="Help and updates">
            <svg width="34" height="34" viewBox="0 0 34 34">
              <circle cx="14" cy="20" r="12" fill="#0a1e50" stroke="#2c8cd8" strokeWidth="2" />
              <path d="M9 17c0-6 10-6 10-1 0 4-5 4-5 7M14 25v4" fill="none" stroke="#fff" strokeWidth="3.500" />
              <circle cx="24" cy="10" r="9" fill="#e0a010" /><path d="M24 4v7M24 13v3" stroke="#fff" strokeWidth="3.500" />
            </svg>
          </TrayIcon>
          <TrayIcon $w={22} aria-label="Show hidden icons"><svg width="7" height="4"><path d="M0 4h7L3.500 0z" fill="#e8e8e8" /></svg></TrayIcon>
          <TrayIcon $w={26} aria-label="Battery">
            <svg width="14" height="16" viewBox="0 0 14 16" fill="none" stroke="#fff"><path d="M8 14.500H1.500v-12H3v-1h5v1h1.500" strokeWidth="1.500" /><path d="M3 5h3v8H3z" fill="#999" stroke="none" /><path d="M6.500 5.500h6v3l-2 2h-2l-2-2zM8.500 3v2M11.500 3v2M9.500 10v5" fill="#fff" /></svg>
          </TrayIcon>
          <TrayIcon $w={24} aria-label="Network">
            <svg width="15" height="11" viewBox="0 0 15 11" fill="#fff"><path d="M0 9h2v2H0zM3 8h2v3H3zM6 6h2v5H6zM9 3h2v8H9z" /><path d="M12 0h2v11h-2z" fill="#666" /></svg>
          </TrayIcon>
          <TrayIcon $w={26} aria-label="Volume">
            <svg width="13" height="13" viewBox="0 0 13 13"><path d="M0 4h2l4-4v13L2 9H0z" fill="#fff" /><path d="M9 4c2 2 2 4 0 6" fill="none" stroke="#ccc" /></svg>
          </TrayIcon>
          <Clock>12:33 AM<br />2/27/2012</Clock>
          <ShowDesktop aria-label="Show desktop" />
        </Tray>
      </TaskBar>
    </Window>
  );
}
